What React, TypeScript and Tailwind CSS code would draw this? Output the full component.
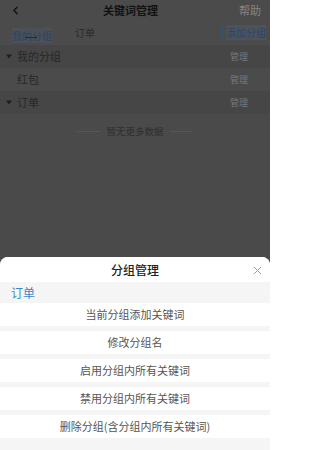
import { X, ChevronLeft } from "lucide-react";

const actions = [
  "当前分组添加关键词",
  "修改分组名",
  "启用分组内所有关键词",
  "禁用分组内所有关键词",
  "删除分组(含分组内所有关键词)",
];

function Caret() {
  return (
    <svg width="6" height="5" viewBox="0 0 6 5" className="mr-[5px]">
      <path d="M0 0.5h6L3 4.5z" fill="#1f1f1f" />
    </svg>
  );
}

function GroupHeader({ name }: { name: string }) {
  return (
    <div className="flex h-[23px] items-center justify-between bg-[#464646] pl-[6px] pr-[22px]">
      <div className="flex items-center text-[11px] text-[#262626]">
        <Caret />
        {name}
      </div>
      <span className="text-[9px] text-[#777]">管理</span>
    </div>
  );
}

export default function App() {
  return (
    <div
      className="relative flex h-[450px] w-[270px] flex-col overflow-hidden bg-[#4a4a4a]"
      style={{ fontFamily: '"Noto Sans CJK SC", "Noto Sans", sans-serif' }}
    >
      {/* dimmed page */}
      <div className="flex h-[20px] items-center justify-between bg-[#4b4b4b] pl-[9px] pr-[9px]">
        <ChevronLeft className="h-[13px] w-[13px] text-[#111]" strokeWidth={2.5} />
        <span className="text-[11px] font-bold text-[#121212]">关键词管理</span>
        <span className="text-[11px] text-[#858585]">帮助</span>
      </div>
      <div className="flex h-[25px] items-center justify-between bg-[#4b4b4b] pl-[12px] pr-[4px]">
        <div className="flex items-center gap-[23px]">
          <div className="relative">
            <span className="bg-[#4c5158] text-[10px] text-[#2c4462]">我的分组</span>
            <div className="absolute left-[13px] top-[16px] h-[1.5px] w-[12px] bg-[#1e2a38]" />
          </div>
          <span className="text-[10px] text-[#2a2a2a]">订单</span>
        </div>
        <div className="flex items-center">
          <div className="mr-[3px] h-[11px] w-[1px] bg-[#34547a]" />
          <span className="bg-[#4d535b] text-[10px] text-[#2c4668]">添加分组</span>
        </div>
      </div>

      <GroupHeader name="我的分组" />
      <div className="flex h-[23px] items-center justify-between bg-[#4b4b4b] pl-[17px] pr-[22px]">
        <span className="text-[11px] text-[#282828]">红包</span>
        <span className="text-[9px] text-[#777]">管理</span>
      </div>
      <GroupHeader name="订单" />

      <div className="mt-[10px] flex items-center justify-center gap-[6px]">
        <div className="h-px w-[23px] bg-[#575757]" />
        <span className="text-[9.5px] text-[#2e2e2e]">暂无更多数据</span>
        <div className="h-px w-[23px] bg-[#575757]" />
      </div>

      {/* bottom sheet */}
      <div className="absolute bottom-0 left-0 right-0 top-[257px] flex flex-col overflow-hidden rounded-t-[8px] bg-[#f5f5f5]">
        <div className="relative flex h-[25px] shrink-0 items-center justify-center bg-white">
          <span className="text-[12px] font-medium text-[#222]">分组管理</span>
          <X className="absolute right-[6px] top-[7px] h-[13px] w-[13px] text-[#999]" strokeWidth={1.8} />
        </div>
        <div className="flex h-[21px] shrink-0 items-center pl-[11px]">
          <span className="text-[12px] text-[#3a8ac8]">订单</span>
        </div>
        <div className="flex flex-col gap-[5px]">
          {actions.map((a) => (
            <div key={a} className="flex h-[23px] items-center justify-center bg-white text-[11px] text-[#555]">
              {a}
            </div>
          ))}
        </div>
      </div>
    </div>
  );
}
